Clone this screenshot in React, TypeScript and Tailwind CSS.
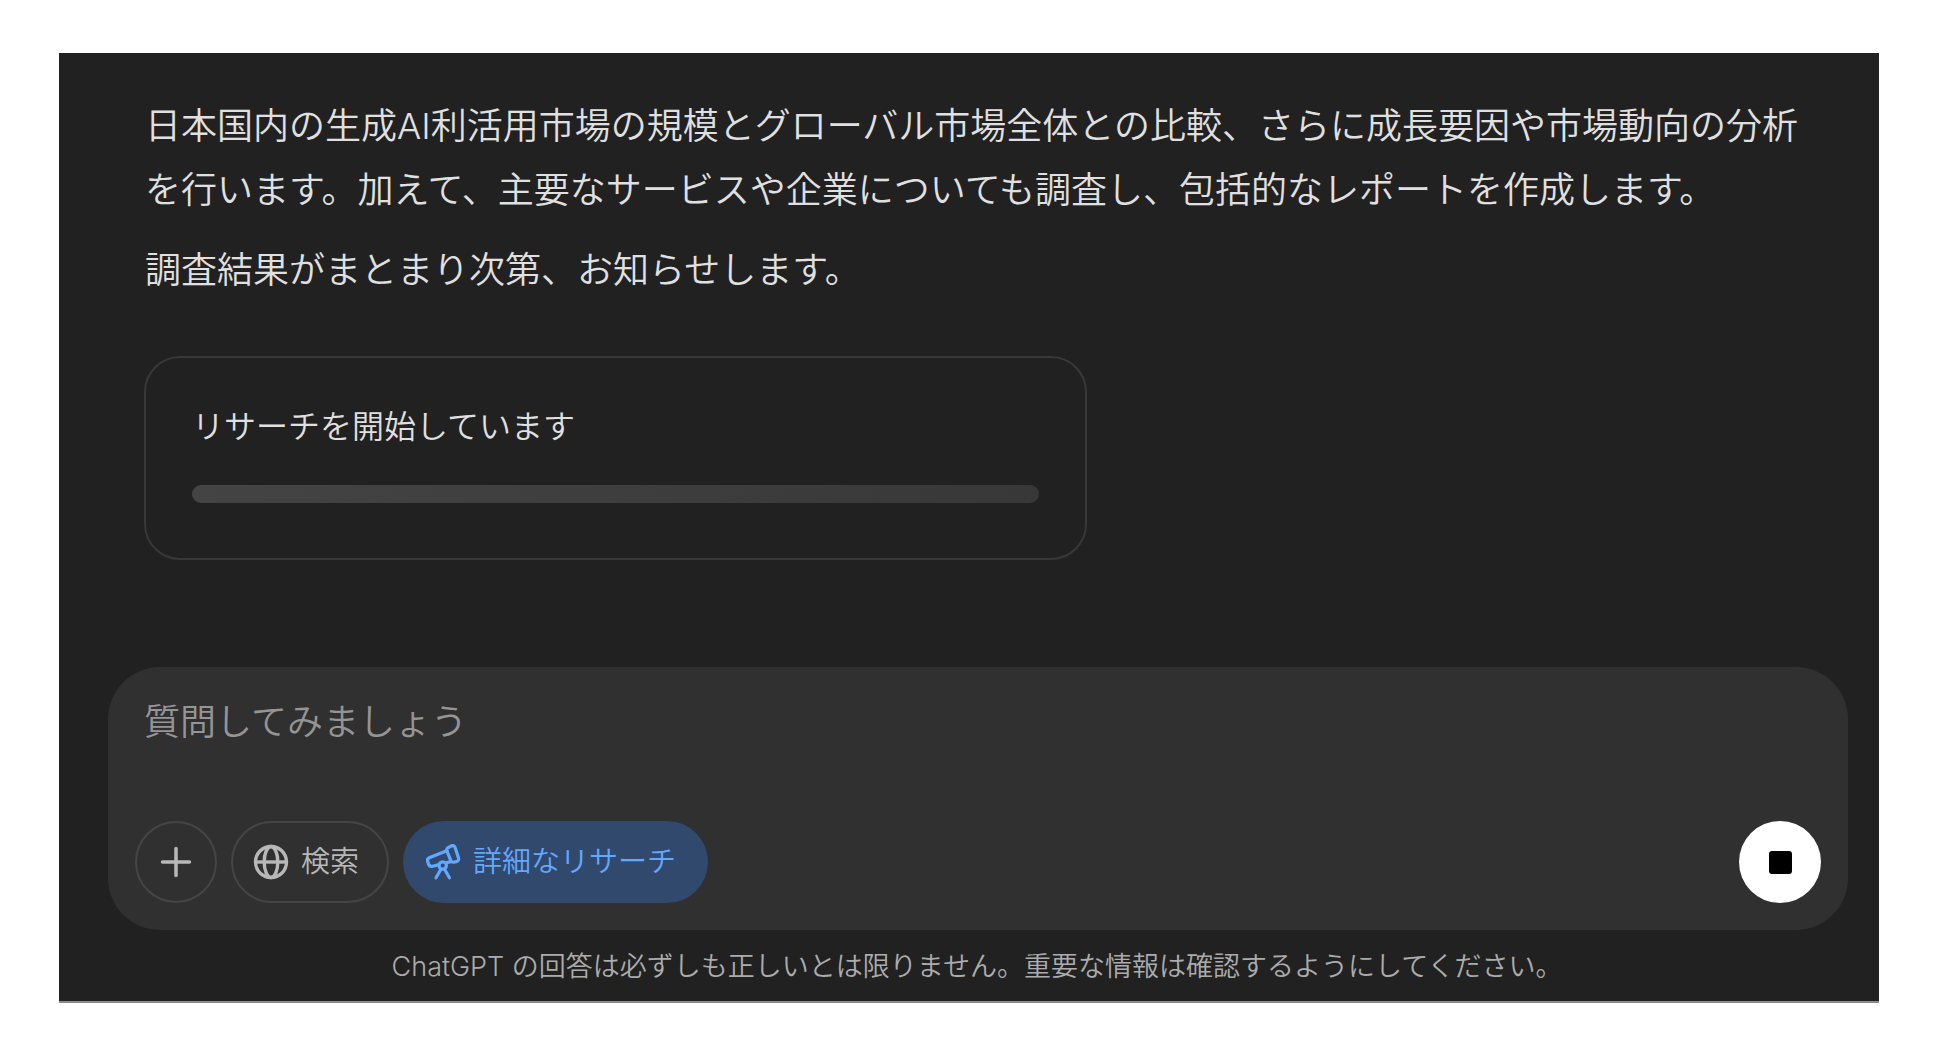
import React from "react";

function PlusIcon() {
  return (
    <svg viewBox="0 0 32 32" className="size-8" fill="none" stroke="currentColor" strokeWidth="3.5" strokeLinecap="round" aria-hidden="true">
      <path d="M16 2.5v27M2.5 16h27" />
    </svg>
  );
}

function GlobeIcon() {
  return (
    <svg viewBox="0 0 36 36" className="size-9" fill="none" stroke="currentColor" strokeWidth="3.4" aria-hidden="true">
      <circle cx="18" cy="18" r="15.5" />
      <ellipse cx="18" cy="18" rx="6.8" ry="15.5" />
      <path d="M2.5 18h31" />
    </svg>
  );
}

function TelescopeIcon() {
  return (
    <svg viewBox="0 0 36 36" className="size-9" fill="none" stroke="currentColor" strokeWidth="3.2" strokeLinecap="round" strokeLinejoin="round" aria-hidden="true">
      <path d="M22.4 4.2 26.2 2c1.7-.9 3.200-.4 3.900 1.400l3.400 10.600c.5 1.800-.2 3.200-2 3.600l-3 .6c-1.300.2-2.200-.3-2.700-1.600L21.900 6.800c-.4-1.100-.3-1.900.5-2.600Z" />
      <path d="M21.900 6.800 4.800 13.500c-1.900.8-2.700 2.200-2.100 4l.8 2.700c.7 1.800 2.200 2.500 4.100 2l6.400-1.600M21.500 18.800l4.300-1.200" />
      <circle cx="17.7" cy="21.5" r="3.700" />
      <path d="m15.800 25.500-4.800 8.300M19.700 25.500l4.800 8.300" />
    </svg>
  );
}

export default function App() {
  return (
    <div className="min-h-screen bg-white px-[59px] py-[53px] font-['Inter','Noto_Sans_CJK_JP',sans-serif] font-[350]">
      <main lang="ja" className="flex flex-col border-b-2 border-[#8a8a8a] bg-[#212121] text-[#e0e0e0]">
        <article className="flex flex-col gap-4 pt-[41px] pr-16 pl-[86px] text-[36px] leading-[64px]">
          <p>
            日本国内の生成AI利活用市場の規模とグローバル市場全体との比較、さらに成長要因や市場動向の分析を行います。加えて、主要なサービスや企業についても調査し、包括的なレポートを作成します。
          </p>
          <p>調査結果がまとまり次第、お知らせします。</p>
        </article>

        <section className="mt-[54px] ml-[85px] w-[943px] max-w-full rounded-[36px] border-2 border-[#383838] px-[46px] pt-[45px] pb-[55px]">
          <h2 id="status" className="text-[32px] leading-[48px] font-[350]">リサーチを開始しています</h2>
          <div role="progressbar" aria-labelledby="status" className="mt-[34px] h-[18px] rounded-full bg-linear-to-r from-[#444444] to-[#383838]" />
        </section>

        <form className="mt-[107px] mr-[31px] ml-[49px] flex flex-col rounded-[52px] bg-[#303030] px-[27px] pt-[23px] pb-[27px]" onSubmit={(e) => e.preventDefault()}>
          <textarea
            rows={1}
            aria-label="質問"
            placeholder="質問してみましょう"
            className="block h-16 w-full resize-none bg-transparent px-[9px] text-[36px] leading-[64px] outline-none placeholder:text-[#959595]"
          />
          <div className="mt-[67px] flex items-center text-[29px] leading-[40px] text-[#b8b8b8]">
            <button type="button" aria-label="追加" className="flex size-[82px] items-center justify-center rounded-full border-2 border-[#454545]">
              <PlusIcon />
            </button>
            <button type="button" className="ml-3.5 flex h-[82px] items-center gap-3 rounded-full border-2 border-[#454545] pr-7 pl-5">
              <GlobeIcon />
              検索
            </button>
            <button type="button" aria-pressed="true" className="ml-3.5 flex h-[82px] items-center gap-3 rounded-full bg-[#31496d] pr-8 pl-[22px] text-[#62a8ff]">
              <TelescopeIcon />
              詳細なリサーチ
            </button>
            <button type="button" aria-label="停止" className="ml-auto flex size-[82px] items-center justify-center rounded-full bg-white">
              <span className="size-[23px] rounded-[3px] bg-black" />
            </button>
          </div>
        </form>

        <p className="pt-[17px] pb-[14px] pl-4 text-center text-[27px] leading-[40px] text-[#acacac]">
          ChatGPT の回答は必ずしも正しいとは限りません。重要な情報は確認するようにしてください。
        </p>
      </main>
    </div>
  );
}
